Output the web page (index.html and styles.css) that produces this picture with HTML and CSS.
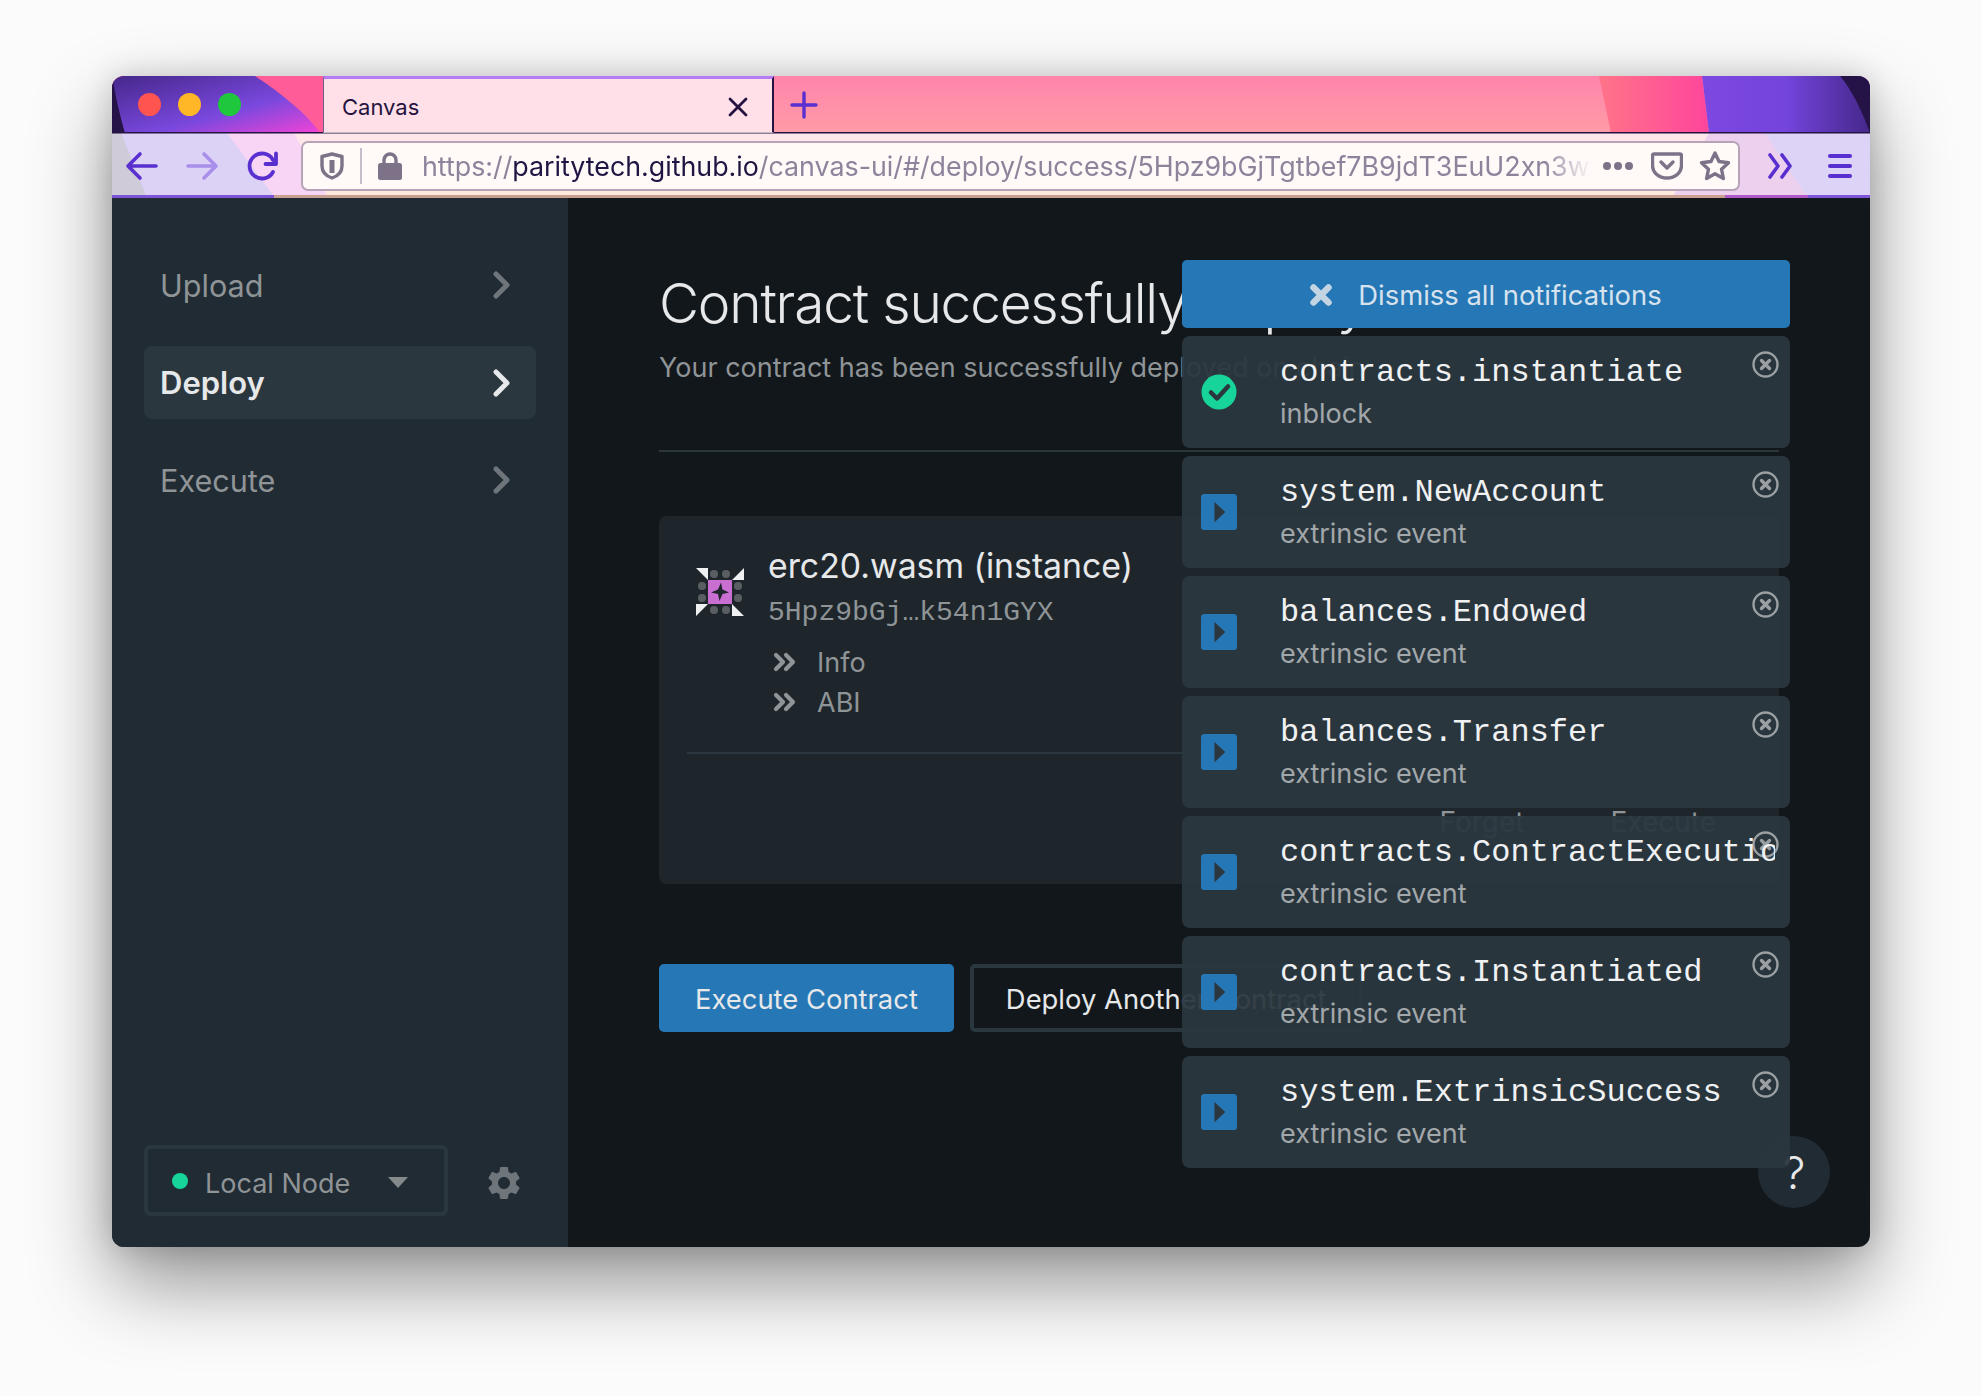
FILE: index.html
```html
<!DOCTYPE html>
<html lang="en">
<head>
    <meta charset="UTF-8">
    <meta name="viewport" content="width=device-width, initial-scale=1.0">
    <title>Canvas</title>
    <link rel="stylesheet" href="styles.css">
</head>
<body>
    <svg class="defs" width="0" height="0">
        <symbol id="close" viewBox="0 0 27 27">
            <circle cx="13.5" cy="13.5" r="12" fill="none" stroke="currentColor" stroke-width="2.4"/>
            <path d="M9.5 9.5l8 8M17.5 9.5l-8 8" fill="none" stroke="currentColor" stroke-width="3.4" stroke-linecap="round"/>
        </symbol>
        <symbol id="play" viewBox="0 0 32 32">
            <rect width="32" height="32" rx="3" fill="#2677b5"/>
            <path d="M12 7L21.5 16 12 25z" fill="#2b373f"/>
        </symbol>
        <symbol id="chev" viewBox="0 0 18 28">
            <path d="M3 3l11 11L3 25" fill="none" stroke="currentColor" stroke-width="5" stroke-linecap="round" stroke-linejoin="round"/>
        </symbol>
        <symbol id="dchev" viewBox="0 0 24 20">
            <path d="M3 3l7 7-7 7M13 3l7 7-7 7" fill="none" stroke="currentColor" stroke-width="4.2" stroke-linecap="round" stroke-linejoin="round"/>
        </symbol>
    </svg>

    <div class="window">
        <header class="chrome">
            <svg class="chrome-bg" viewBox="0 0 1758 122" preserveAspectRatio="none">
                <defs>
                    <linearGradient id="pink" x1="0" y1="0" x2="0" y2="1">
                        <stop offset="0" stop-color="#ff84ac"/>
                        <stop offset="1" stop-color="#ff9ba6"/>
                    </linearGradient>
                    <linearGradient id="leftPurple" x1="0" y1="0" x2="1" y2="1">
                        <stop offset="0" stop-color="#45278a"/>
                        <stop offset="0.6" stop-color="#7a48de"/>
                        <stop offset="1" stop-color="#f343d6"/>
                    </linearGradient>
                    <linearGradient id="rightPurple" x1="0" y1="0" x2="1" y2="0">
                        <stop offset="0" stop-color="#7c48e2"/>
                        <stop offset="0.5" stop-color="#7444dc"/>
                        <stop offset="1" stop-color="#45288a"/>
                    </linearGradient>
                    <linearGradient id="rightPink" x1="0" y1="0" x2="1" y2="0">
                        <stop offset="0" stop-color="#ff7488"/>
                        <stop offset="1" stop-color="#ff459c"/>
                    </linearGradient>
                    <linearGradient id="barLight" x1="0" y1="0" x2="0" y2="1">
                        <stop offset="0" stop-color="#ffe6ea"/>
                        <stop offset="1" stop-color="#ffe9dc"/>
                    </linearGradient>
                </defs>
                <rect width="1758" height="57" fill="url(#pink)"/>
                <path d="M0 0H211V57H0z" fill="#ff5c98"/>
                <path d="M0 0H143C170 18 195 38 208 57H0z" fill="url(#leftPurple)"/>
                <path d="M0 0C4 22 8 40 13 57H0z" fill="#251347"/>
                <path d="M1487 0H1590L1597 57H1499z" fill="url(#rightPink)"/>
                <path d="M1590 0H1758V57H1597z" fill="url(#rightPurple)"/>
                <path d="M1728 0H1758V57C1750 35 1740 14 1728 0z" fill="#251347"/>
                <rect y="57" width="1758" height="65" fill="url(#barLight)"/>
                <path d="M0 57H182L216 122H0z" fill="#f8d4f5"/>
                <path d="M0 57H115L163 122H35z" fill="#dcd2f6"/>
                <path d="M0 57H9L35 122H0z" fill="#cfcbd8"/>
                <path d="M1597 57H1758V122H1560z" fill="#ecd0ee"/>
                <path d="M1653 57H1758V122H1696z" fill="#ddd3f6"/>
                <rect y="119" width="162" height="3" fill="#7d54d8"/>
                <rect x="162" y="119" width="1451" height="3" fill="#c9a08f"/>
                <rect x="1613" y="119" width="83" height="3" fill="#b058c8"/>
                <rect x="1696" y="119" width="62" height="3" fill="#7d54d8"/>
                <rect y="56" width="1758" height="1.5" fill="#241340"/>
            </svg>

            <div class="tabbar">
                <div class="lights">
                    <span class="light red"></span>
                    <span class="light yellow"></span>
                    <span class="light green"></span>
                </div>
                <div class="tab">
                    <span class="tab-title">Canvas</span>
                    <svg class="tab-x" width="20" height="20" viewBox="0 0 20 20"><path d="M2 2l16 16M18 2L2 18" fill="none" stroke="#241340" stroke-width="2.8" stroke-linecap="round"/></svg>
                </div>
                <svg class="tab-plus" width="28" height="28" viewBox="0 0 28 28"><path d="M14 2v24M2 14h24" fill="none" stroke="#5a2fd0" stroke-width="3.4" stroke-linecap="round"/></svg>
            </div>

            <div class="toolbar">
                <svg class="nav-icon" width="34" height="30" viewBox="0 0 34 30"><path d="M31 15H4M15 3L3 15l12 12" fill="none" stroke="#5a2fd0" stroke-width="3.6" stroke-linecap="round" stroke-linejoin="round"/></svg>
                <svg class="nav-icon" width="34" height="30" viewBox="0 0 34 30"><path d="M3 15h27M19 3l12 12-12 12" fill="none" stroke="#a88fe9" stroke-width="3.6" stroke-linecap="round" stroke-linejoin="round"/></svg>
                <svg class="nav-icon reload" width="32" height="30" viewBox="0 0 32 30"><path d="M26 21a12.5 12.5 0 1 1 0-12" fill="none" stroke="#5a2fd0" stroke-width="3.8" stroke-linecap="round"/><path d="M29 2.5V13H18.5" fill="none" stroke="#5a2fd0" stroke-width="3.8" stroke-linecap="round" stroke-linejoin="round"/></svg>

                <div class="urlbar">
                    <svg class="url-shield" width="24" height="28" viewBox="0 0 24 28"><path d="M12 2l10 2.5V14c0 6-4 10-10 12C6 24 2 20 2 14V4.5z" fill="none" stroke="#7d7288" stroke-width="3.4" stroke-linejoin="round"/><path d="M12 8v13" stroke="#7d7288" stroke-width="5"/></svg>
                    <span class="url-sep"></span>
                    <svg class="url-lock" width="24" height="28" viewBox="0 0 24 28"><path d="M6 12V8a6 6 0 0 1 12 0v4" fill="none" stroke="#7d7288" stroke-width="3.4"/><rect x="0" y="11" width="24" height="17" rx="2.5" fill="#7d7288"/></svg>
                    <div class="url-text">https://<b>paritytech.github.io</b>/canvas-ui/#/deploy/success/5Hpz9bGjTgtbef7B9jdT3EuU2xn3wYkMXk54n1GYX</div>
                    <div class="url-dots"><i></i><i></i><i></i></div>
                    <svg class="url-pocket" width="32" height="28" viewBox="0 0 32 28"><path d="M3 2h26a1.5 1.5 0 0 1 1.5 1.5V13c0 8-6.5 13-14.5 13S1.5 21 1.5 13V3.5A1.5 1.5 0 0 1 3 2z" fill="none" stroke="#7d7288" stroke-width="3.4"/><path d="M10 10l6 6 6-6" fill="none" stroke="#7d7288" stroke-width="3.4" stroke-linecap="round" stroke-linejoin="round"/></svg>
                    <svg class="url-star" width="32" height="32" viewBox="0 0 32 32"><path d="M16 3l4 8.5 9.5 1.2-7 6.5 1.9 9.3L16 23.800 7.600 28.500l1.900-9.300-7-6.500 9.500-1.200z" fill="none" stroke="#7d7288" stroke-width="3.4" stroke-linejoin="round"/></svg>
                </div>

                <svg class="more-icon" width="26" height="26" viewBox="0 0 26 26"><path d="M3 2l8 11-8 11M15 2l8 11-8 11" fill="none" stroke="#5a2fd0" stroke-width="3.6" stroke-linecap="round" stroke-linejoin="round"/></svg>
                <div class="burger"><i></i><i></i><i></i></div>
            </div>
        </header>

        <div class="app">
            <aside class="sidebar">
                <nav class="nav">
                    <a class="nav-item">Upload<svg class="chev"><use href="#chev"/></svg></a>
                    <a class="nav-item active">Deploy<svg class="chev"><use href="#chev"/></svg></a>
                    <a class="nav-item">Execute<svg class="chev"><use href="#chev"/></svg></a>
                </nav>
                <div class="side-foot">
                    <div class="node-select">
                        <span class="node-dot"></span>
                        <span class="node-name">Local Node</span>
                        <span class="node-caret"></span>
                    </div>
                    <svg class="gear" width="40" height="40" viewBox="0 0 24 24"><path fill="#6f767b" d="M19.14 12.94c.04-.3.06-.61.06-.94 0-.32-.02-.64-.07-.94l2.03-1.58a.49.49 0 0 0 .12-.61l-1.92-3.32a.488.488 0 0 0-.59-.22l-2.39.96c-.5-.38-1.03-.7-1.62-.94l-.36-2.54a.484.484 0 0 0-.48-.41h-3.84c-.24 0-.43.17-.47.41l-.36 2.54c-.59.24-1.13.57-1.62.94l-2.39-.96c-.22-.08-.47 0-.59.22L2.74 8.87c-.12.21-.08.47.12.61l2.03 1.58c-.05.3-.09.63-.09.94s.02.64.07.94l-2.03 1.58a.49.49 0 0 0-.12.61l1.92 3.32c.12.22.37.29.59.22l2.39-.96c.5.38 1.03.7 1.62.94l.36 2.54c.05.24.24.41.48.41h3.84c.24 0 .44-.17.47-.41l.36-2.54c.59-.24 1.13-.56 1.62-.94l2.39.96c.22.08.47 0 .59-.22l1.92-3.32c.12-.22.07-.47-.12-.61l-2.01-1.58zM12 15.6c-1.98 0-3.6-1.62-3.6-3.6s1.62-3.6 3.6-3.6 3.6 1.62 3.6 3.6-1.62 3.6-3.6 3.6z"/></svg>
                </div>
            </aside>

            <main class="main">
                <div class="page-head">
                    <h1>Contract successfully deployed</h1>
                    <p>Your contract has been successfully deployed on chain</p>
                </div>

                <section class="contract">
                    <div class="contract-top">
                        <svg class="identicon" width="48" height="48" viewBox="0 0 48 48">
                            <path d="M0 0h12v12zM48 0v12H36zM0 48V36h12zM48 48H36V36z" fill="#eef0f1"/>
                            <g fill="#5c5f62">
                                <circle cx="18" cy="6" r="4"/><circle cx="30" cy="6" r="4"/>
                                <circle cx="18" cy="42" r="4"/><circle cx="30" cy="42" r="4"/>
                                <circle cx="6" cy="18" r="4"/><circle cx="6" cy="30" r="4"/>
                                <circle cx="42" cy="18" r="4"/><circle cx="42" cy="30" r="4"/>
                            </g>
                            <rect x="12" y="12" width="24" height="24" fill="#c96fd2"/>
                            <path d="M25 14.5l1.5 7 6.5 3-6.5 1.5-3 7-1.5-7-7-1.5 7-3z" fill="#1e262c"/>
                        </svg>
                        <div class="contract-info">
                            <div class="contract-name">erc20.wasm (instance)</div>
                            <div class="contract-addr">5Hpz9bGj…k54n1GYX</div>
                            <div class="contract-link"><svg class="dchev"><use href="#dchev"/></svg>Info</div>
                            <div class="contract-link"><svg class="dchev"><use href="#dchev"/></svg>ABI</div>
                        </div>
                    </div>
                    <div class="contract-actions">
                        <span>Forget</span>
                        <span>Execute</span>
                    </div>
                </section>

                <div class="actions">
                    <button class="btn primary">Execute Contract</button>
                    <button class="btn outline">Deploy Another Contract</button>
                </div>
            </main>
        </div>

        <button class="help">?</button>

        <div class="notifications">
            <button class="dismiss">
                <svg width="22" height="22" viewBox="0 0 22 22"><path d="M3.5 3.5l15 15M18.5 3.5l-15 15" fill="none" stroke="#c3d4e2" stroke-width="6.5" stroke-linecap="round"/></svg>
                Dismiss all notifications
            </button>
            <div class="notice">
                <svg class="notice-icon" viewBox="0 0 36 36"><circle cx="18" cy="18" r="17.5" fill="#17d59a"/><path d="M10 18.5l6 6 11-12" fill="none" stroke="#2b373f" stroke-width="4.5" stroke-linecap="round" stroke-linejoin="round"/></svg>
                <div class="notice-text"><div class="notice-title">contracts.instantiate</div><div class="notice-sub">inblock</div></div>
                <svg class="notice-close"><use href="#close"/></svg>
            </div>
            <div class="notice">
                <svg class="notice-icon"><use href="#play"/></svg>
                <div class="notice-text"><div class="notice-title">system.NewAccount</div><div class="notice-sub">extrinsic event</div></div>
                <svg class="notice-close"><use href="#close"/></svg>
            </div>
            <div class="notice">
                <svg class="notice-icon"><use href="#play"/></svg>
                <div class="notice-text"><div class="notice-title">balances.Endowed</div><div class="notice-sub">extrinsic event</div></div>
                <svg class="notice-close"><use href="#close"/></svg>
            </div>
            <div class="notice">
                <svg class="notice-icon"><use href="#play"/></svg>
                <div class="notice-text"><div class="notice-title">balances.Transfer</div><div class="notice-sub">extrinsic event</div></div>
                <svg class="notice-close"><use href="#close"/></svg>
            </div>
            <div class="notice">
                <svg class="notice-icon"><use href="#play"/></svg>
                <div class="notice-text"><div class="notice-title">contracts.ContractExecution</div><div class="notice-sub">extrinsic event</div></div>
                <svg class="notice-close"><use href="#close"/></svg>
            </div>
            <div class="notice">
                <svg class="notice-icon"><use href="#play"/></svg>
                <div class="notice-text"><div class="notice-title">contracts.Instantiated</div><div class="notice-sub">extrinsic event</div></div>
                <svg class="notice-close"><use href="#close"/></svg>
            </div>
            <div class="notice">
                <svg class="notice-icon"><use href="#play"/></svg>
                <div class="notice-text"><div class="notice-title">system.ExtrinsicSuccess</div><div class="notice-sub">extrinsic event</div></div>
                <svg class="notice-close"><use href="#close"/></svg>
            </div>
        </div>
    </div>
</body>
</html>
```
FILE: styles.css
```css
* {
    box-sizing: border-box;
}
html, body {
    height: 100%;
}
body {
    margin: 0;
    padding: 76px 112px 0;
    background: #fbfbfb;
    font-family: Inter, "Liberation Sans", sans-serif;
    overflow: hidden;
}
.defs {
    position: absolute;
}
.window {
    position: relative;
    width: 1758px;
    height: 1171px;
    border-radius: 12px;
    overflow: hidden;
    display: flex;
    flex-direction: column;
    background: #12171b;
}
/* window shadow, kept apart because .window clips its content */
body::before {
    content: "";
    position: absolute;
    left: 112px;
    top: 76px;
    width: 1758px;
    height: 1171px;
    border-radius: 12px;
    box-shadow: 0 36px 80px rgba(0, 0, 0, 0.42), 0 0 30px rgba(0, 0, 0, 0.16);
}

/* browser chrome */
.chrome {
    position: relative;
    height: 122px;
    flex: none;
}
.chrome-bg {
    position: absolute;
    left: 0;
    top: 0;
    width: 100%;
    height: 100%;
}
.tabbar {
    position: relative;
    display: flex;
    align-items: center;
    height: 57px;
}
.lights {
    display: flex;
    gap: 17px;
    width: 211px;
    padding-left: 26px;
    margin-top: -1px;
}
.light {
    width: 23px;
    height: 23px;
    border-radius: 50%;
}
.light.red { background: #ff5450; }
.light.yellow { background: #ffb627; }
.light.green { background: #1fc73c; }
.tab {
    display: flex;
    align-items: center;
    justify-content: space-between;
    width: 451px;
    height: 57px;
    padding: 2px 24px 0 18px;
    background: #ffe0e8;
    border-top: 3px solid #b47bf2;
    border-left: 1px solid #6d5a85;
    border-right: 2px solid #241340;
    border-bottom: 1px solid #c9b6c4;
}
.tab-title {
    font-size: 22px;
    color: #241340;
}
.tab-plus {
    margin-left: 16px;
}
.toolbar {
    position: relative;
    display: flex;
    align-items: center;
    height: 65px;
    padding-left: 13px;
}
.nav-icon {
    margin-right: 26px;
    flex: none;
}
.nav-icon.reload {
    margin-left: 2px;
    margin-right: 22px;
}
.urlbar {
    display: flex;
    align-items: center;
    width: 1439px;
    height: 50px;
    padding: 0 7px 0 17px;
    background: #fff9f8;
    border: 2px solid #b7a3b8;
    border-radius: 7px;
    flex: none;
}
.url-sep {
    width: 2px;
    height: 36px;
    margin: 0 16px;
    background: #c7bcc9;
}
.url-text {
    flex: 1;
    min-width: 0;
    margin-left: 20px;
    padding-top: 1px;
    font-size: 26.8px;
    color: #8d849c;
    white-space: nowrap;
    overflow: hidden;
    -webkit-mask-image: linear-gradient(to right, #000 96%, transparent 100%);
    mask-image: linear-gradient(to right, #000 96%, transparent 100%);
}
.url-text b {
    font-weight: 400;
    color: #1f1442;
}
.url-dots {
    display: flex;
    gap: 3px;
    margin-left: 12px;
}
.url-dots i {
    width: 8px;
    height: 8px;
    border-radius: 50%;
    background: #7d7288;
}
.url-pocket {
    margin-left: 18px;
    flex: none;
}
.url-star {
    margin-left: 16px;
    flex: none;
}
.more-icon {
    margin-left: 27px;
}
.burger {
    display: flex;
    flex-direction: column;
    gap: 6px;
    width: 24px;
    margin-left: 35px;
}
.burger i {
    height: 4px;
    border-radius: 2px;
    background: #5a2fd0;
}

/* app */
.app {
    flex: 1;
    display: flex;
    min-height: 0;
}
.sidebar {
    width: 456px;
    flex: none;
    display: flex;
    flex-direction: column;
    justify-content: space-between;
    padding: 50px 32px 31px;
    background: #212b33;
}
.nav {
    display: flex;
    flex-direction: column;
    gap: 24.5px;
}
.nav-item {
    display: flex;
    align-items: center;
    justify-content: space-between;
    height: 73px;
    padding: 1px 25px 0 16px;
    border-radius: 8px;
    font-size: 30.6px;
    color: #8f9497;
}
.nav-item .chev {
    width: 18px;
    height: 28px;
    color: #6f767b;
}
.nav-item.active {
    background: #2b373f;
    color: #e6e8ea;
    font-size: 31px;
    font-weight: 600;
}
.nav-item.active .chev {
    color: #e6e8ea;
}
.side-foot {
    display: flex;
    align-items: center;
    justify-content: space-between;
    padding-right: 12px;
}
.node-select {
    display: flex;
    align-items: center;
    width: 304px;
    height: 71px;
    padding: 0 34px 0 24px;
    border: 4px solid #2b373f;
    border-radius: 6px;
}
.node-dot {
    width: 16px;
    height: 16px;
    border-radius: 50%;
    background: #17d59a;
}
.node-name {
    flex: 1;
    margin-left: 17px;
    padding-top: 6px;
    font-size: 27px;
    color: #8f9497;
}
.node-caret {
    width: 0;
    height: 0;
    margin: 4px 2px 0 0;
    border-left: 10px solid transparent;
    border-right: 10px solid transparent;
    border-top: 11px solid #84898c;
}
.gear {
    margin-top: 5px;
}
.main {
    flex: 1;
    padding: 71px 91px 0 91px;
}
.page-head {
    height: 183px;
    border-bottom: 2px solid #2b373f;
}
.page-head h1 {
    margin: 0;
    font-size: 55px;
    line-height: 68px;
    font-weight: 300;
    letter-spacing: -1.2px;
    color: #e6e8ea;
    white-space: nowrap;
}
.page-head p {
    margin: 11px 0 0;
    font-size: 27px;
    line-height: 40px;
    color: #8f9497;
}
.contract {
    height: 368px;
    margin-top: 64px;
    padding: 28px 28px 0;
    background: #1e262c;
    border-radius: 8px;
}
.contract-top {
    display: flex;
    height: 210px;
    padding-left: 9px;
    border-bottom: 2px solid #2b373f;
}
.identicon {
    margin: 24px 24px 0 0;
    flex: none;
}
.contract-name {
    margin-top: -1px;
    font-size: 33.8px;
    line-height: 46px;
    color: #e6e8ea;
}
.contract-addr {
    margin-top: 4px;
    font-family: "Liberation Mono", monospace;
    font-size: 28px;
    line-height: 40px;
    color: #8f9497;
}
.contract-link {
    display: flex;
    align-items: center;
    height: 40px;
    font-size: 27px;
    color: #8f9497;
}
.contract-addr + .contract-link {
    margin-top: 9px;
}
.dchev {
    width: 24px;
    height: 20px;
    margin: 0 20px 0 5px;
    color: #8f9497;
}
.contract-actions {
    display: flex;
    justify-content: flex-end;
    gap: 86px;
    padding: 50px 35px 0 0;
    font-size: 28px;
    line-height: 36px;
    color: #8f9497;
}
.actions {
    display: flex;
    gap: 16px;
    margin-top: 80px;
}
.btn {
    height: 68px;
    padding: 2px 36px 0;
    border-radius: 5px;
    font-family: inherit;
    font-size: 27.4px;
    color: #e6e8ea;
}
.btn.primary {
    background: #2677b5;
    border: none;
}
.btn.outline {
    padding: 2px 32px 0;
    background: transparent;
    border: 4px solid #2b373f;
}

/* help button and notification stack lie over the page */
.help {
    position: absolute;
    right: 40px;
    bottom: 39px;
    width: 72px;
    height: 72px;
    padding: 0;
    border: none;
    border-radius: 50%;
    background: #212b33;
    color: #e6e8ea;
    font-family: inherit;
    font-size: 45px;
    font-weight: 300;
}
.notifications {
    position: absolute;
    left: 1070px;
    top: 184px;
    width: 608px;
    display: flex;
    flex-direction: column;
    gap: 8px;
}
.dismiss {
    display: flex;
    align-items: center;
    justify-content: center;
    gap: 26px;
    height: 68px;
    padding-top: 2px;
    border: none;
    border-radius: 5px;
    background: #2677b5;
    color: #d6e3ee;
    font-family: inherit;
    font-size: 27.4px;
}
.notice {
    position: relative;
    display: flex;
    align-items: center;
    height: 112px;
    padding: 0 15px 0 19px;
    border-radius: 8px;
    background: rgba(43, 55, 63, 0.95);
}
.notice-icon {
    width: 36px;
    height: 36px;
    margin-right: 43px;
    flex: none;
}
.notice-text {
    position: relative;
    z-index: 1;
    flex: 1;
    min-width: 0;
    padding-top: 2px;
    overflow: hidden;
}
.notice-title {
    font-family: "Liberation Mono", monospace;
    font-size: 32px;
    line-height: 40px;
    color: #f0f1f2;
    white-space: nowrap;
}
.notice-sub {
    margin-top: 1px;
    font-size: 27px;
    line-height: 40px;
    color: #a2a7aa;
}
.notice-close {
    position: absolute;
    top: 15px;
    right: 11px;
    width: 27px;
    height: 27px;
    color: #9a9fa2;
}
```
